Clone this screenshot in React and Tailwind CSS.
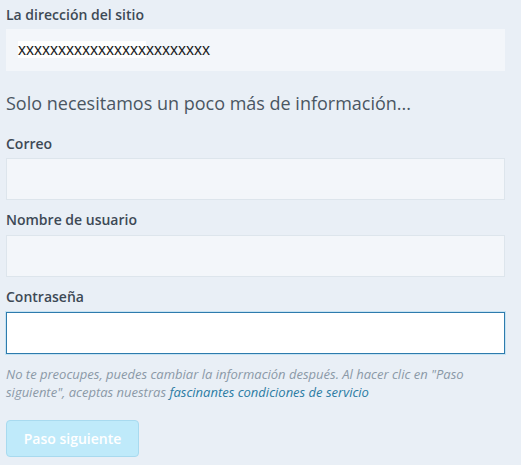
export default function App() {
  const font = { fontFamily: '"Open Sans", "Noto Sans", sans-serif' };
  return (
    <div className="min-h-[465px] w-[521px] bg-[#e9eff6] pl-[6px] pt-[5px]" style={font}>
      <div className="w-[499px]">
        <label className="mb-[4px] block text-[14px] font-semibold leading-[20px] text-[#3d4955]">
          La dirección del sitio
        </label>
        <div className="flex h-[42px] items-center bg-[#f3f6fa] pl-[12px]">
          <span className="text-[16px] text-[#1a1a1a]" style={{ fontFamily: '"Liberation Sans", Arial, sans-serif' }}>
            <span className="bg-white">xxxxxxxxxxxxxxxx</span>xxxxxxxx
          </span>
        </div>

        <h2 className="mt-[19px] text-[18px] leading-[26px] text-[#4a5662]">
          Solo necesitamos un poco más de información...
        </h2>

        <div className="mt-[18px]">
          <label className="mb-[4px] block text-[14px] font-semibold leading-[20px] text-[#3d4955]">Correo</label>
          <input className="block h-[42px] w-full border border-[#dde5ec] bg-[#f3f6fa] outline-none" />
        </div>
        <div className="mt-[10px]">
          <label className="mb-[5px] block text-[14px] font-semibold leading-[20px] text-[#3d4955]">Nombre de usuario</label>
          <input className="block h-[42px] w-full border border-[#dde5ec] bg-[#f3f6fa] outline-none" />
        </div>
        <div className="mt-[10px]">
          <label className="mb-[5px] block text-[14px] font-semibold leading-[20px] text-[#3d4955]">Contraseña</label>
          <input
            type="password"
            className="block h-[42px] w-full border border-[#2e7bad] bg-white shadow-[0_0_0_1px_#c6e3f3] outline-none"
          />
        </div>

        <p className="mt-[11px] pr-[20px] text-[13px] italic leading-[18px] text-[#8b99a7]">
          No te preocupes, puedes cambiar la información después. Al hacer clic en "Paso siguiente", aceptas nuestras{' '}
          <a className="text-[#2b7ba3]">fascinantes condiciones de servicio</a>
        </p>

        <button className="mt-[19px] h-[37px] w-[133px] rounded-[4px] border border-[#a8daef] bg-[#bfeafa] text-[14px] font-semibold text-white">
          Paso siguiente
        </button>
      </div>
    </div>
  );
}
